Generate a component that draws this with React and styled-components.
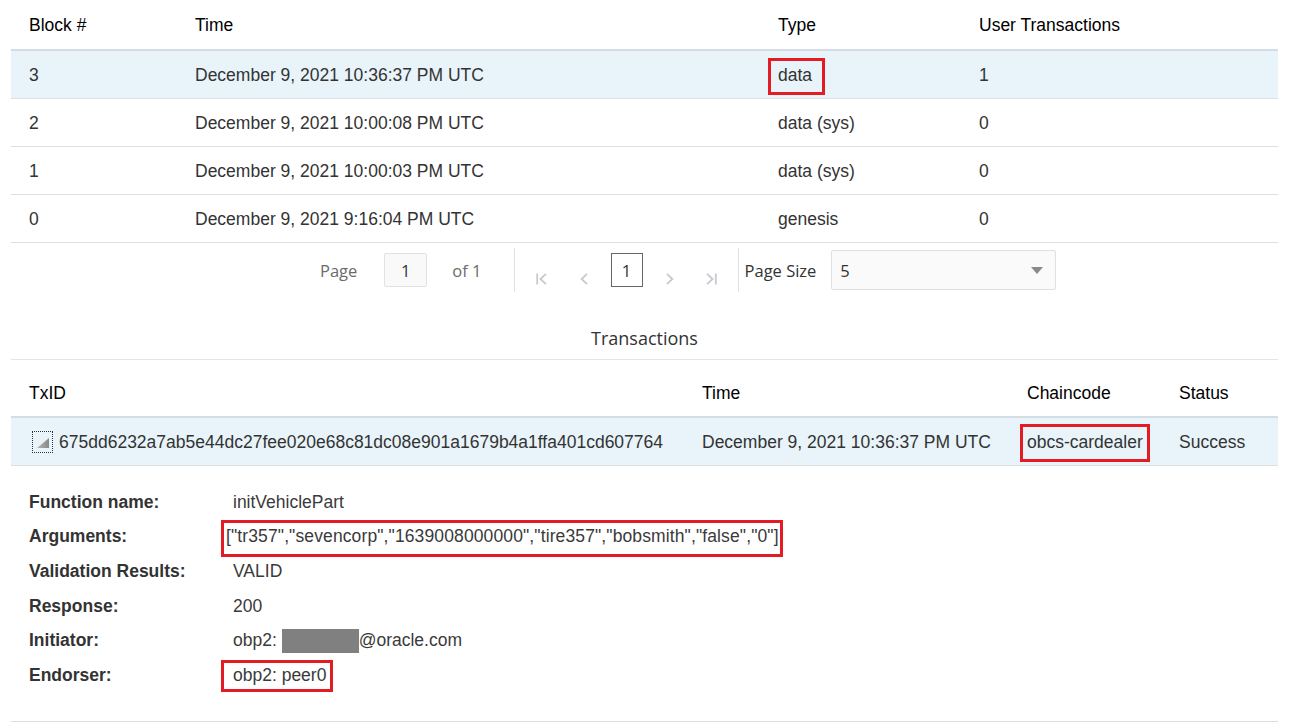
import React from 'react';
import styled, { createGlobalStyle } from 'styled-components';

const GlobalStyle = createGlobalStyle`
  html, body {
    margin: 0;
    padding: 0;
    background: #ffffff;
  }
  body {
    font-family: "Liberation Sans", Arial, sans-serif;
    color: #333333;
  }
`;

const Page = styled.div`
  width: 1290px;
  box-sizing: border-box;
  padding: 0 12px 0 11px;
`;

const BLOCK_COLS = '166px 583px 201px 1fr';
const TX_COLS = '673px 325px 152px 1fr';

const HeadRow = styled.div`
  display: grid;
  grid-template-columns: ${(p) => p.$cols};
  align-items: center;
  height: ${(p) => p.$h}px;
  padding-top: ${(p) => p.$pt || 0}px;
  box-sizing: border-box;
  border-bottom: 2px solid #d5dde4;
  font-size: 17.5px;
  color: #000000;
`;

const BodyRow = styled.div`
  display: grid;
  grid-template-columns: ${(p) => p.$cols};
  align-items: center;
  height: 48px;
  padding-top: 1px;
  box-sizing: border-box;
  border-bottom: 1px solid #dedfe1;
  background: ${(p) => (p.$selected ? '#e8f3fa' : '#ffffff')};
  font-size: 17.5px;
  color: #333333;
`;

const Cell = styled.div`
  display: flex;
  align-items: center;
  padding-left: ${(p) => (p.$pl != null ? p.$pl : 18)}px;
  white-space: nowrap;
`;

/* red annotation frame; the negative margin keeps the text in its column,
   $shift moves the framed text sideways by a few pixels */
const Marked = styled.span`
  display: inline-block;
  line-height: normal;
  border: 3px solid #e31b23;
  letter-spacing: ${(p) => p.$spacing || 0}px;
  padding: ${(p) => p.$pad.map((v) => `${v}px`).join(' ')};
  margin: ${(p) => {
    const [t, r, b, l] = p.$pad;
    const s = p.$shift || 0;
    return `${-(t + 3)}px ${-(r + 3) - s}px ${-(b + 3)}px ${-(l + 3) + s}px`;
  }};
`;

/* ---------- pager ---------- */

const Pager = styled.div`
  display: flex;
  align-items: center;
  height: 54px;
  padding-left: 309px;
  font-family: "Open Sans", "Noto Sans", sans-serif;
  font-size: 16.5px;
`;

const PagerText = styled.span`
  color: ${(p) => (p.$muted ? '#6b6b6b' : '#333333')};
  margin-left: ${(p) => p.$ml || 0}px;
  white-space: nowrap;
`;

const PageInput = styled.div`
  width: 43px;
  height: 34px;
  box-sizing: border-box;
  margin-left: 27px;
  border: 1px solid #e2e2e2;
  border-radius: 2px;
  background: #f9f9f9;
  display: flex;
  align-items: center;
  justify-content: center;
  color: #333333;
`;

const Divider = styled.div`
  width: 1px;
  height: 44px;
  background: #e0e0e0;
  margin-left: ${(p) => p.$ml}px;
`;

const NavBtn = styled.span`
  width: 42px;
  display: flex;
  justify-content: center;
  padding-top: 18px;
  margin-left: ${(p) => p.$ml || 0}px;
  color: #c6cacf;
`;

const CurrentPage = styled.div`
  width: 32px;
  height: 34px;
  box-sizing: border-box;
  margin-left: 6px;
  border: 1px solid #666666;
  display: flex;
  align-items: center;
  justify-content: center;
  color: #333333;
`;

const SizeSelect = styled.div`
  width: 225px;
  height: 40px;
  box-sizing: border-box;
  margin-left: 15px;
  padding: 0 12px 0 8px;
  border: 1px solid #e0e0e0;
  border-radius: 2px;
  background: #fafafa;
  display: flex;
  align-items: center;
  justify-content: space-between;
  color: #333333;
`;

/* ---------- transactions ---------- */

const SectionTitle = styled.div`
  height: 63px;
  box-sizing: border-box;
  padding-top: 29px;
  line-height: 24px;
  text-align: center;
  font-family: "Open Sans", "Noto Sans", sans-serif;
  font-size: 18px;
  color: #333333;
  border-bottom: 1px solid #e4e4e4;
`;

const ExpandToggle = styled.span`
  width: 21px;
  height: 22px;
  box-sizing: border-box;
  border: 1px dotted #333333;
  margin-right: 6px;
  display: flex;
`;

const Details = styled.div`
  display: grid;
  grid-template-columns: 204px 1fr;
  grid-auto-rows: 34.6px;
  align-items: center;
  padding: 19px 0 28px 18px;
  border-bottom: 1px solid #dddddd;
  font-size: 17.5px;
  color: #333333;
`;

const Label = styled.div`
  font-weight: bold;
  white-space: nowrap;
`;

const Value = styled.div`
  white-space: nowrap;
  color: #3a3a3a;
`;

const Redacted = styled.span`
  display: inline-block;
  width: 77px;
  height: 24px;
  background: #808080;
  vertical-align: middle;
`;

/* ---------- icons ---------- */

const FirstIcon = () => (
  <svg width="11" height="12" viewBox="0 0 11 12" fill="none" stroke="currentColor" strokeWidth="1.8">
    <path d="M1.2 0.5V11.5" />
    <path d="M10 0.8L4.4 6L10 11.2" />
  </svg>
);

const PrevIcon = () => (
  <svg width="8" height="12" viewBox="0 0 8 12" fill="none" stroke="currentColor" strokeWidth="1.8">
    <path d="M7 0.8L1.6 6L7 11.2" />
  </svg>
);

const NextIcon = () => (
  <svg width="8" height="12" viewBox="0 0 8 12" fill="none" stroke="currentColor" strokeWidth="1.8">
    <path d="M1 0.8L6.4 6L1 11.2" />
  </svg>
);

const LastIcon = () => (
  <svg width="11" height="12" viewBox="0 0 11 12" fill="none" stroke="currentColor" strokeWidth="1.8">
    <path d="M1 0.8L6.6 6L1 11.2" />
    <path d="M9.8 0.5V11.5" />
  </svg>
);

const Caret = () => (
  <svg width="12" height="7" viewBox="0 0 12 7">
    <polygon points="0,0 12,0 6,7" fill="#8a8a8a" />
  </svg>
);

const Corner = () => (
  <svg width="19" height="20" viewBox="0 0 19 20">
    <defs>
      <linearGradient id="cornerFill" x1="0" y1="0" x2="1" y2="0">
        <stop offset="0" stopColor="#b8b8b8" />
        <stop offset="1" stopColor="#888888" />
      </linearGradient>
    </defs>
    <polygon points="16,6 16,16 4,16" fill="url(#cornerFill)" />
  </svg>
);

const blocks = [
  { n: '3', time: 'December 9, 2021 10:36:37 PM UTC', type: 'data', tx: '1', selected: true },
  { n: '2', time: 'December 9, 2021 10:00:08 PM UTC', type: 'data (sys)', tx: '0' },
  { n: '1', time: 'December 9, 2021 10:00:03 PM UTC', type: 'data (sys)', tx: '0' },
  { n: '0', time: 'December 9, 2021 9:16:04 PM UTC', type: 'genesis', tx: '0' },
];

export default function App() {
  return (
    <>
      <GlobalStyle />
      <Page>
        <HeadRow $cols={BLOCK_COLS} $h={51} $pt={2}>
          <Cell>Block #</Cell>
          <Cell>Time</Cell>
          <Cell>Type</Cell>
          <Cell>User Transactions</Cell>
        </HeadRow>
        {blocks.map((b) => (
          <BodyRow key={b.n} $cols={BLOCK_COLS} $selected={b.selected}>
            <Cell>{b.n}</Cell>
            <Cell>{b.time}</Cell>
            <Cell>
              {b.selected ? <Marked $pad={[4, 10, 6, 7]}>{b.type}</Marked> : b.type}
            </Cell>
            <Cell>{b.tx}</Cell>
          </BodyRow>
        ))}

        <Pager>
          <PagerText $muted>Page</PagerText>
          <PageInput>1</PageInput>
          <PagerText $muted $ml={25}>of 1</PagerText>
          <Divider $ml={32} />
          <NavBtn $ml={6}><FirstIcon /></NavBtn>
          <NavBtn><PrevIcon /></NavBtn>
          <CurrentPage>1</CurrentPage>
          <NavBtn $ml={6}><NextIcon /></NavBtn>
          <NavBtn><LastIcon /></NavBtn>
          <Divider $ml={5} />
          <PagerText $ml={6}>Page Size</PagerText>
          <SizeSelect>
            <span>5</span>
            <Caret />
          </SizeSelect>
        </Pager>

        <SectionTitle>Transactions</SectionTitle>

        <HeadRow $cols={TX_COLS} $h={58} $pt={11}>
          <Cell>TxID</Cell>
          <Cell>Time</Cell>
          <Cell>Chaincode</Cell>
          <Cell>Status</Cell>
        </HeadRow>
        <BodyRow $cols={TX_COLS} $selected>
          <Cell $pl={21}>
            <ExpandToggle><Corner /></ExpandToggle>
            675dd6232a7ab5e44dc27fee020e68c81dc08e901a1679b4a1ffa401cd607764
          </Cell>
          <Cell>December 9, 2021 10:36:37 PM UTC</Cell>
          <Cell>
            <Marked $pad={[5, 4, 6, 4]}>obcs-cardealer</Marked>
          </Cell>
          <Cell>Success</Cell>
        </BodyRow>

        <Details>
          <Label>Function name:</Label>
          <Value>initVehiclePart</Value>
          <Label>Arguments:</Label>
          <Value>
            <Marked $pad={[3, 1, 7, 2]} $shift={-7} $spacing={0.12}>
              ["tr357","sevencorp","1639008000000","tire357","bobsmith","false","0"]
            </Marked>
          </Value>
          <Label>Validation Results:</Label>
          <Value>VALID</Value>
          <Label>Response:</Label>
          <Value>200</Value>
          <Label>Initiator:</Label>
          <Value>
            obp2: <Redacted />@oracle.com
          </Value>
          <Label>Endorser:</Label>
          <Value>
            <Marked $pad={[2, 4, 3, 9]}>obp2: peer0</Marked>
          </Value>
        </Details>
      </Page>
    </>
  );
}
